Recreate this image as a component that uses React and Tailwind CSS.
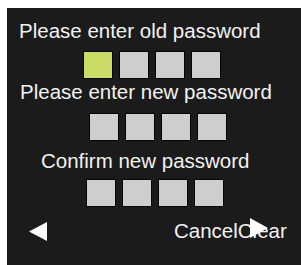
export default function App() {
  const font = { fontFamily: '"Liberation Sans", Arial, sans-serif' };
  const Box = ({ active }) => (
    <div
      className={`w-[30px] h-[28px] border border-[#050505] ${active ? 'bg-[#cadb66]' : 'bg-[#cecece]'}`}
    />
  );
  const Row = ({ first, className }) => (
    <div className={`flex gap-[6px] ${className}`}>
      <Box active={first} />
      <Box />
      <Box />
      <Box />
    </div>
  );

  return (
    <div className="w-[301px] h-[265px] bg-white overflow-hidden" style={font}>
      <div className="ml-[7px] mt-[8px] h-[257px] bg-[#1b1b1b] text-[#f2f2f2] text-[20.5px] leading-[24px] pt-[11px] flex flex-col">
        <p className="ml-[12px]">Please enter old password</p>
        <Row first className="ml-[76px] mt-[8px]" />
        <p className="ml-[13px] mt-[1px]">Please enter new password</p>
        <Row className="ml-[82px] mt-[9px]" />
        <p className="ml-[34px] mt-[8px]">Confirm new password</p>
        <Row className="ml-[79px] mt-[6px]" />
        <div className="relative flex items-center mt-[12px] h-[24px]">
          <svg width="19" height="19" viewBox="0 0 19 19" className="ml-[22px]">
            <polygon points="0,9.5 18,0 18,19" fill="#ffffff" />
          </svg>
          <span className="ml-[126px]">CancelClear</span>
          <svg
            width="19"
            height="20"
            viewBox="0 0 19 20"
            className="absolute left-[243px] top-[-1px]"
          >
            <polygon points="0,0 18,10 0,20" fill="#ffffff" />
          </svg>
        </div>
      </div>
    </div>
  );
}
